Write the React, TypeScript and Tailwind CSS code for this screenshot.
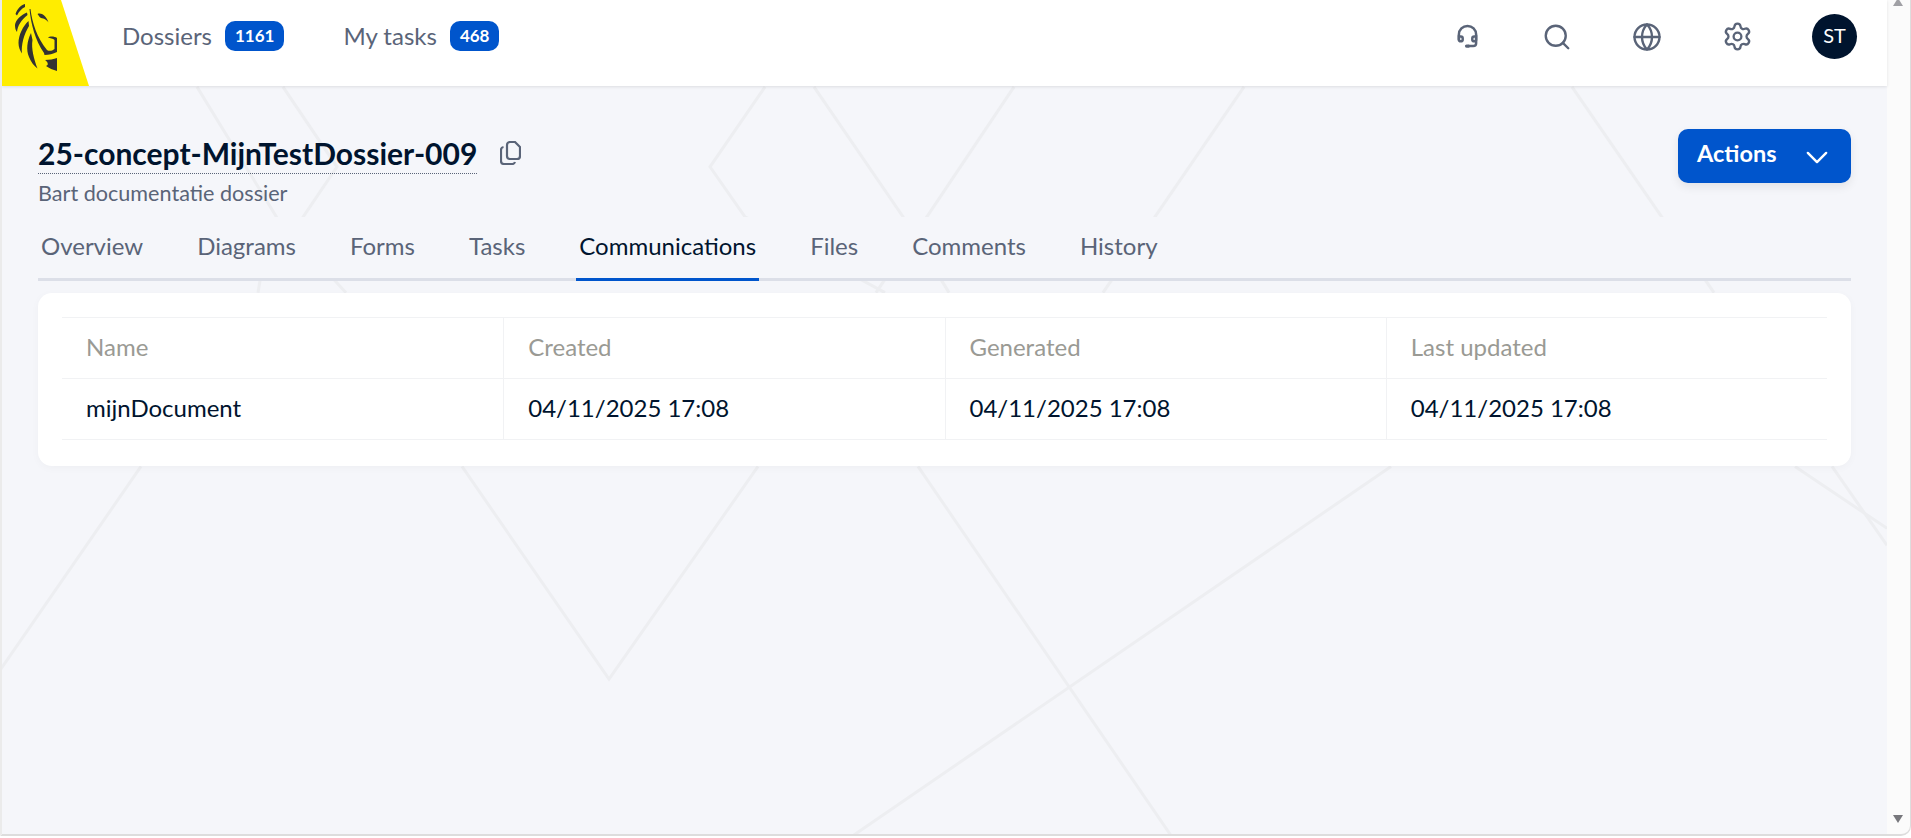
import React from "react";
import { Search, Globe, Settings } from "lucide-react";

const tabs = ["Overview", "Diagrams", "Forms", "Tasks", "Communications", "Files", "Comments", "History"];
const columns = ["Name", "Created", "Generated", "Last updated"];
const cells = ["mijnDocument", "04/11/2025 17:08", "04/11/2025 17:08", "04/11/2025 17:08"];

function Backdrop() {
  return (
    <svg className="absolute inset-0 w-full h-full" viewBox="2 0 1885 835" preserveAspectRatio="none">
      <g fill="none" stroke="#edeef1" strokeWidth="3">
        <path d="M197 87 L277 218 L346 293" />
        <path d="M283 87 L337 167 L260 281 L258 293" />
        <path d="M765 87 L710 167 L745 217 L885 293" />
        <path d="M814 87 L903 217 L949 293" />
        <path d="M1014 87 L876 293" />
        <path d="M1244 87 L1103 293" />
        <path d="M1572 87 L1714 293" />
        <path d="M141 467 L0 671" />
        <path d="M462 467 L609 680 L758 467" />
        <path d="M918 467 L1172 838" />
        <path d="M1391 467 L851 838" />
        <path d="M1795 467 L1887 529" />
        <path d="M1832 467 L1887 546" />
      </g>
    </svg>
  );
}

function Logo() {
  return (
    <div className="self-start shrink-0 w-[88px] h-[86px] bg-[#ffed00] [clip-path:polygon(0_0,59px_0,87px_86px,0_86px)]">
      <svg viewBox="2 0 60 72" className="w-[60px] h-[72px]" fill="#333332">
        <path d="M25 4 C21 5 17 9 15.500 14 L17 15.500 C19 11 22 8.500 25 7 Z" />
        <path d="M27 12.500 C21 15 15.500 20 15 25 C15 28 15.500 30 17 32 C17.500 26 21 20 27.500 15 Z" />
        <path d="M28.500 21 C23 26 18.500 35 18.500 43 C18.500 47 20 51 22 53.500 C21 45 24 34 29 26 Z" />
        <path d="M29.500 9 L30.500 9 C32 22 37 38 47 50 C49 51.500 52 51 54.500 49 L54.500 40 C53 38.500 50 38 48 37.500 C50 36 55 36.500 57 38 L57 52 C53 54 49 55 44.500 55 L44 53 C35 40 31 24 29.500 9 Z" />
        <path d="M31 33 C27 41 26 50 29 57 C31 62 34 66 37.500 68.500 C34 60 31 48 32.500 40 Z" />
        <path d="M45 60 C49 60 54 59 57 58 L57 71 C53 70 49 68 46 66 C49 65 48 62 45 60 Z" />
        <path d="M37.500 14 C41 12.500 46 15 48.500 22.500 C46 19 44 18.500 41 18 C39.500 17 38.500 15.500 37.500 14 Z" />
      </svg>
    </div>
  );
}

function Headset() {
  return (
    <svg viewBox="0 0 24 26" className="w-[23px] h-[25px]" fill="none" stroke="currentColor" strokeWidth="2.6" strokeLinecap="round">
      <path d="M3 16 V11 a9 9 0 0 1 18 0 V20 a3 3 0 0 1 -3 3 H13" />
      <path d="M3 13 h2 a2 2 0 0 1 2 2 v1 a2 2 0 0 1 -2 2 a2 2 0 0 1 -2 -2 Z" />
      <path d="M21 13 h-2 a2 2 0 0 0 -2 2 v1 a2 2 0 0 0 2 2 a2 2 0 0 0 2 -2 Z" />
      <path d="M11 23 h2" strokeWidth="3.4" />
    </svg>
  );
}

function CopyIcon() {
  return (
    <svg viewBox="0 0 21 24" className="ml-[1px] mt-[3px] w-[21px] h-[24px] text-[#5a6478]" fill="none" stroke="currentColor" strokeWidth="2.2" strokeLinejoin="round">
      <path d="M7 4 a3 3 0 0 1 3 -3 h5 l5 5 v9 a3 3 0 0 1 -3 3 h-7 a3 3 0 0 1 -3 -3 Z" />
      <path d="M3.5 6 a3 3 0 0 0 -2.500 3 v11 a3 3 0 0 0 3 3 h8 a3 3 0 0 0 3 -2" />
    </svg>
  );
}

function Badge({ children }: { children: React.ReactNode }) {
  return (
    <span className="h-[30px] px-[10px] rounded-[10px] bg-[#0055cc] text-white text-[17px] font-bold flex items-center">
      {children}
    </span>
  );
}

export default function App() {
  return (
    <div className="h-[838px] w-[1911px] overflow-hidden bg-white">
      <div className="h-[836px] flex bg-[#fbfbfb] border-l-2 border-r border-b-2 border-l-[#ebebeb] border-r-[#dddddd] border-b-[#dddddd] rounded-br-[10px] overflow-hidden font-['Lato',sans-serif]">
        <div className="relative w-[1885px] shrink-0 bg-[#f5f6fa] flex flex-col">
          <Backdrop />
          <header className="relative h-[86px] bg-white shadow-[0_1px_3px_rgba(0,0,0,0.1)] flex items-center pb-[13px] pr-[30px]">
            <Logo />
            <nav className="flex items-center ml-[32px] -mt-[1px] gap-[59px] text-[24px] text-[#5a6478]">
              <div className="flex items-center gap-[13px]">
                <span>Dossiers</span>
                <Badge>1161</Badge>
              </div>
              <div className="flex items-center gap-[13px]">
                <span>My tasks</span>
                <Badge>468</Badge>
              </div>
            </nav>
            <div className="ml-auto flex items-center gap-[60px] text-[#5a6478]">
              <div className="w-[30px] flex justify-center">
                <Headset />
              </div>
              <div className="w-[30px] flex justify-center">
                <Search size={30} strokeWidth={1.9} className="shrink-0" />
              </div>
              <div className="w-[30px] flex justify-center">
                <Globe size={30} strokeWidth={1.9} className="shrink-0" />
              </div>
              <div className="w-[30px] flex justify-center">
                <Settings size={31} strokeWidth={1.8} className="shrink-0" />
              </div>
              <div className="w-[45px] h-[45px] rounded-full bg-[#00142e] text-white text-[20px] pb-[3px] flex items-center justify-center">
                ST
              </div>
            </div>
          </header>

          <main className="relative px-[36px] pt-[52px]">
            <div className="flex items-start justify-between">
              <div>
                <div className="flex items-start gap-[22px]">
                  <h1 className="text-[30px] leading-[30px] font-bold text-[#00142e] border-b border-dotted border-[#5a6478] pb-[5px]">
                    25-concept-MijnTestDossier-009
                  </h1>
                  <CopyIcon />
                </div>
                <div className="mt-[7px] text-[21.6px] leading-[24px] text-[#5a6478]">Bart documentatie dossier</div>
              </div>
              <button className="-mt-[9px] h-[54px] w-[173px] rounded-[10px] bg-[#0055cc] text-white text-[23.5px] font-bold flex items-center justify-between pl-[19px] pr-[23px] shadow-[0_4px_10px_rgba(0,0,0,0.08)]">
                <span className="pb-[5px]">Actions</span>
                <svg viewBox="0 0 24 14" className="w-[22px] h-[13px] mt-[3px]" fill="none" stroke="currentColor" strokeWidth="2.6" strokeLinecap="round" strokeLinejoin="round">
                  <path d="M2 2 L12 12 L22 2" />
                </svg>
              </button>
            </div>

            <div className="mt-[12px] pt-[12px] h-[64px] flex gap-[48px] border-b-[3px] border-[#dcdfe8] bg-[#f5f6fa]">
              {tabs.map((t) => (
                <div
                  key={t}
                  className={`relative px-[3px] text-[24px] leading-[34px] ${t === "Communications" ? "text-[#00142e]" : "text-[#5a6478]"}`}
                >
                  {t}
                  {t === "Communications" && (
                    <div className="absolute left-0 right-0 top-[49px] h-[3px] bg-[#0055cc]" />
                  )}
                </div>
              ))}
            </div>

            <div className="mt-[12px] bg-white rounded-[14px] pt-[24px] pb-[26px] px-[24px] shadow-[0_2px_8px_rgba(0,0,0,0.03)]">
              <div className="grid grid-cols-4 border-y border-[#f1f2f4] text-[24px]">
                {columns.map((c, i) => (
                  <div key={c} className={`h-[61px] px-[24px] pb-[3px] flex items-center text-[#9a9a94] border-b border-[#f1f2f4] ${i > 0 ? "border-l" : ""}`}>
                    {c}
                  </div>
                ))}
                {cells.map((c, i) => (
                  <div key={i} className={`h-[60px] px-[24px] pb-[3px] flex items-center text-[#00142e] ${i > 0 ? "border-l border-[#f1f2f4]" : ""}`}>
                    {c}
                  </div>
                ))}
              </div>
            </div>
          </main>
        </div>

        <div className="flex-1 relative">
          <div className="absolute top-[-2px] left-[6px] w-0 h-0 border-x-[5px] border-x-transparent border-b-[8px] border-b-[#a0a0a5]" />
          <div className="absolute bottom-[11px] left-[6px] w-0 h-0 border-x-[5px] border-x-transparent border-t-[8px] border-t-[#77777c]" />
        </div>
      </div>
    </div>
  );
}
